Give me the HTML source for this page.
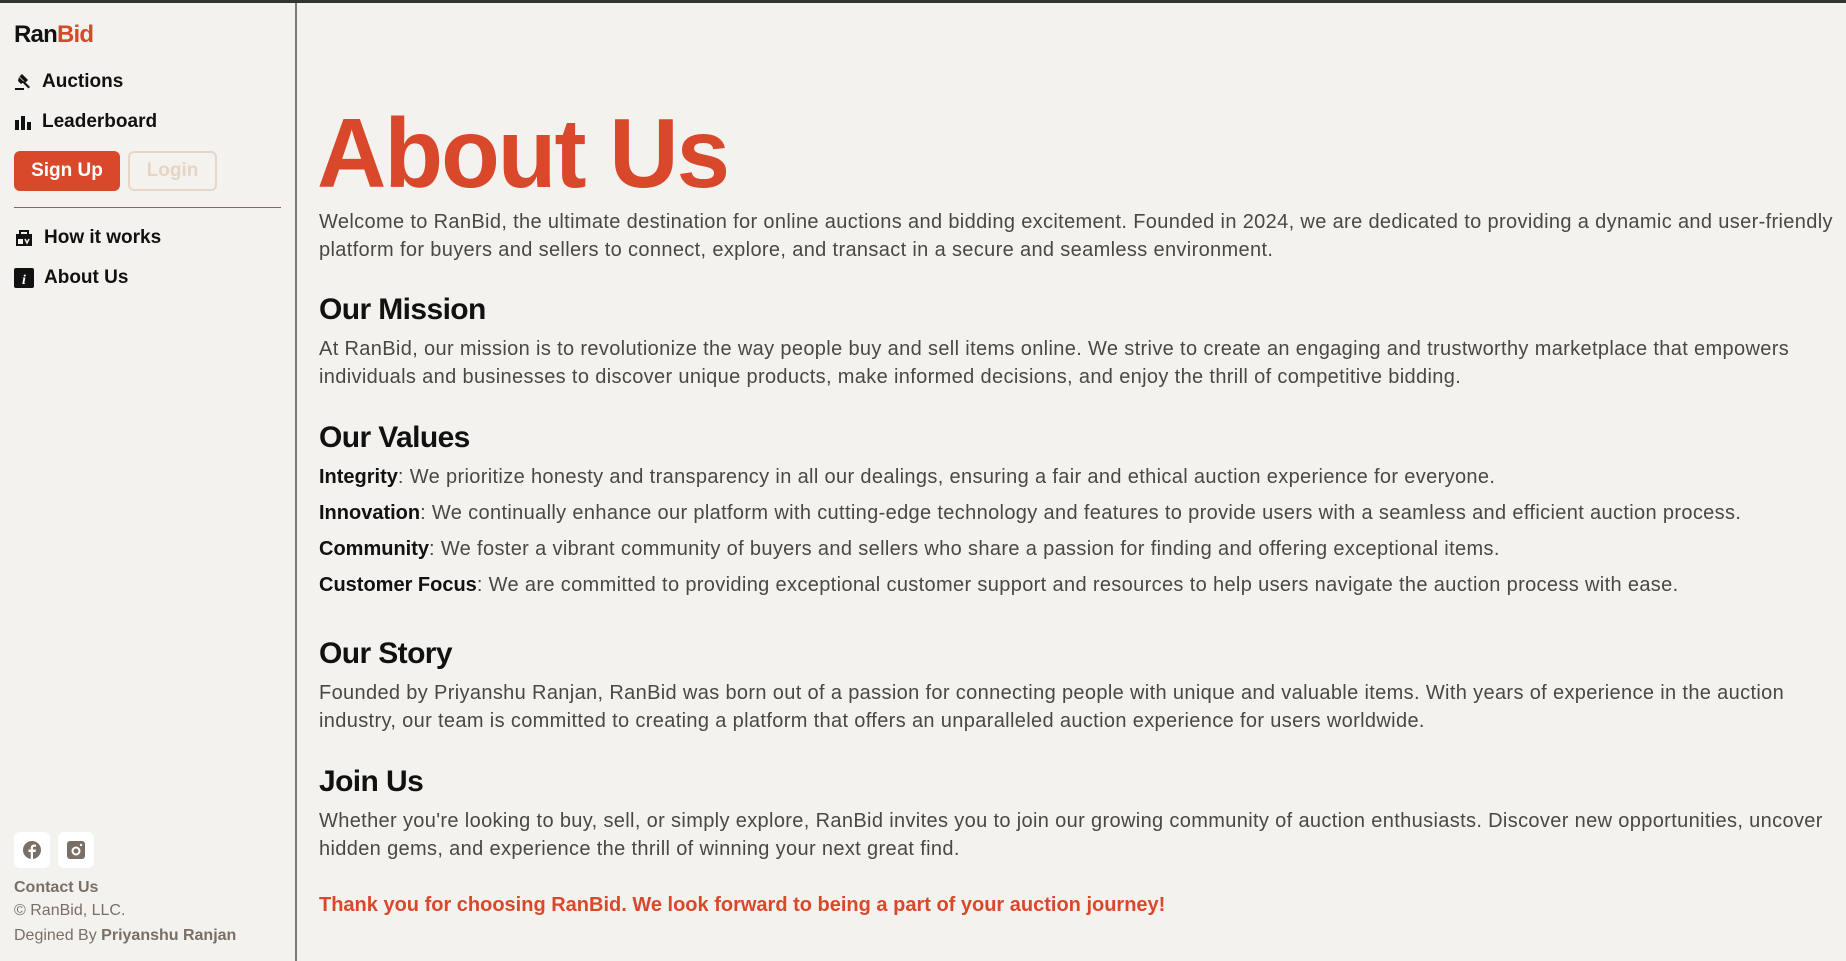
<!DOCTYPE html>
<html><head><meta charset="utf-8"><style>
*{margin:0;padding:0;box-sizing:border-box}
body{width:1846px;height:961px;background:#f4f2ee;font-family:"Liberation Sans",sans-serif;position:relative;overflow:hidden;color:#4b4744}
.topbar{position:absolute;left:0;top:0;width:1846px;height:3px;background:#2f372f}
.side{position:absolute;left:0;top:3px;width:297px;height:958px;border-right:2px solid #7a7a78}
.a{position:absolute;white-space:nowrap}
.logo{left:14px;top:21px;font-size:24px;line-height:28px;font-weight:bold;color:#111;letter-spacing:-0.8px}
.nav{left:14px;font-size:19px;line-height:28px;font-weight:bold;color:#111;display:flex;align-items:center}
.nav svg{margin-right:10px}
.btn{position:absolute;top:151px;height:40px;border-radius:6px;font-size:19px;font-weight:bold;display:flex;align-items:center;justify-content:center}
.p{left:319px;font-size:20px;line-height:28px;color:#4b4744;letter-spacing:0.35px}
.h2{left:319px;font-size:30px;line-height:36px;font-weight:bold;color:#111;letter-spacing:-0.6px}
.v{left:319px;font-size:20px;line-height:36px;letter-spacing:0.35px}
.v b{color:#111;letter-spacing:0}
.foot{left:14px;font-size:16px;line-height:24px;color:#7a6f66}
.ib{position:absolute;top:832px;width:36px;height:36px;background:#fff;border-radius:6px;display:flex;align-items:center;justify-content:center}
</style></head><body>
<div class="topbar"></div>
<div class="side"></div>
<div class="a logo">Ran<span style="color:#d9482b">Bid</span></div>
<div class="a nav" style="top:68px"><svg width="18" height="18" viewBox="0 0 18 18"><path d="M8 1l6 6-2.5 2.5-6-6z" fill="#111"/><path d="M10 8l6 6-1.5 1.5-6-6z" fill="#111"/><path d="M5 4l5 5-3 2-3-3z" fill="#111"/><rect x="1" y="15" width="9" height="2" fill="#111"/></svg>Auctions</div>
<div class="a nav" style="top:108px"><svg width="18" height="18" viewBox="0 0 18 18"><rect x="1" y="7" width="4" height="10" fill="#111"/><rect x="7" y="3" width="4" height="14" fill="#111"/><rect x="13" y="9" width="4" height="8" fill="#111"/></svg>Leaderboard</div>
<div class="btn" style="left:14px;width:106px;background:#d9482b;color:#fff">Sign Up</div>
<div class="btn" style="left:128px;width:89px;border:2px solid #e7d6c8;color:#e6d4c4">Login</div>
<div class="a" style="left:14px;top:207px;width:267px;height:1px;background:#d9482b"></div>
<div class="a nav" style="top:224px"><svg width="20" height="18" viewBox="0 0 20 18"><path d="M2 5h16v12H2z" fill="#111"/><path d="M6 5V2h8v3" stroke="#111" stroke-width="2" fill="none"/><rect x="4" y="10" width="5" height="5" fill="#f4f2ee"/><path d="M11 10l2 4 2-4" stroke="#f4f2ee" stroke-width="1.5" fill="none"/></svg>How it works</div>
<div class="a nav" style="top:264px"><svg width="20" height="20" viewBox="0 0 20 20"><rect x="0" y="0" width="20" height="20" rx="2" fill="#111"/><text x="10" y="16" font-size="14" font-style="italic" font-weight="bold" fill="#fff" text-anchor="middle" font-family="Liberation Serif">i</text></svg>About Us</div>
<div class="ib" style="left:14px"><svg width="20" height="20" viewBox="0 0 20 20"><circle cx="10" cy="10" r="9" fill="#7a6f66"/><path d="M11 19v-7h2.5l.4-2.5H11V8c0-.8.3-1.2 1.3-1.2H14V4.6c-.4 0-1.2-.1-2-.1-2 0-3.2 1.2-3.2 3.3v1.7H6.5V12h2.3v7z" fill="#fff"/></svg></div>
<div class="ib" style="left:58px"><svg width="18" height="18" viewBox="0 0 18 18"><rect x="0" y="0" width="18" height="18" rx="3" fill="#7a6f66"/><circle cx="9" cy="10" r="3.5" fill="none" stroke="#fff" stroke-width="2"/><circle cx="14" cy="4" r="1.2" fill="#fff"/></svg></div>
<div class="a foot" style="top:876px;font-weight:bold">Contact Us</div>
<div class="a foot" style="top:899px">© RanBid, LLC.</div>
<div class="a foot" style="top:924px">Degined By <b>Priyanshu Ranjan</b></div>

<div class="a" style="left:317px;top:104px;font-size:98px;line-height:98px;font-weight:bold;color:#d9482b;letter-spacing:-2px;transform:scaleX(0.98);transform-origin:left">About Us</div>
<div class="a p" style="top:208px">Welcome to RanBid, the ultimate destination for online auctions and bidding excitement. Founded in 2024, we are dedicated to providing a dynamic and user-friendly<br>platform for buyers and sellers to connect, explore, and transact in a secure and seamless environment.</div>
<div class="a h2" style="top:292px">Our Mission</div>
<div class="a p" style="top:335px">At RanBid, our mission is to revolutionize the way people buy and sell items online. We strive to create an engaging and trustworthy marketplace that empowers<br>individuals and businesses to discover unique products, make informed decisions, and enjoy the thrill of competitive bidding.</div>
<div class="a h2" style="top:420px">Our Values</div>
<div class="a v" style="top:459px"><b>Integrity</b>: We prioritize honesty and transparency in all our dealings, ensuring a fair and ethical auction experience for everyone.<br><b>Innovation</b>: We continually enhance our platform with cutting-edge technology and features to provide users with a seamless and efficient auction process.<br><b>Community</b>: We foster a vibrant community of buyers and sellers who share a passion for finding and offering exceptional items.<br><b>Customer Focus</b>: We are committed to providing exceptional customer support and resources to help users navigate the auction process with ease.</div>
<div class="a h2" style="top:636px">Our Story</div>
<div class="a p" style="top:679px">Founded by Priyanshu Ranjan, RanBid was born out of a passion for connecting people with unique and valuable items. With years of experience in the auction<br>industry, our team is committed to creating a platform that offers an unparalleled auction experience for users worldwide.</div>
<div class="a h2" style="top:764px">Join Us</div>
<div class="a p" style="top:807px">Whether you're looking to buy, sell, or simply explore, RanBid invites you to join our growing community of auction enthusiasts. Discover new opportunities, uncover<br>hidden gems, and experience the thrill of winning your next great find.</div>
<div class="a p" style="top:891px;font-weight:bold;color:#d9482b;letter-spacing:0">Thank you for choosing RanBid. We look forward to being a part of your auction journey!</div>
</body></html>
